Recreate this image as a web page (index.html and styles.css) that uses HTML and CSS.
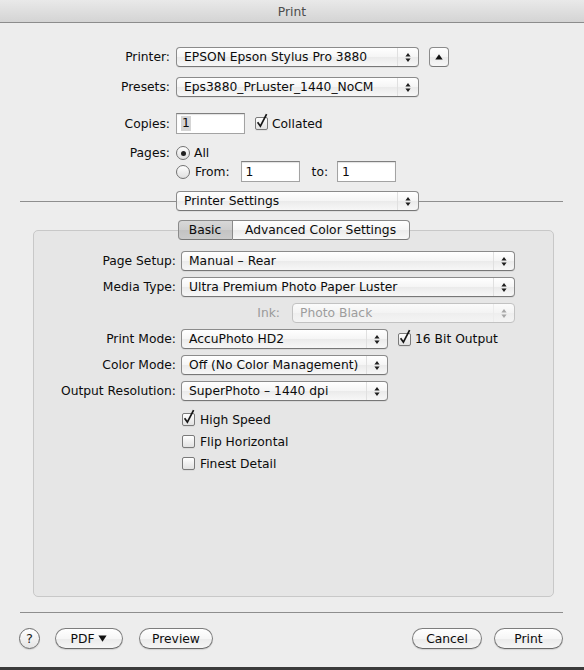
FILE: index.html
```html
<!DOCTYPE html>
<html>
<head>
<meta charset="utf-8">
<title>Print</title>
<link rel="stylesheet" href="styles.css">
</head>
<body>
<div class="window">
  <div class="titlebar">Print</div>
  <div class="main">
    <div class="row r-printer">
      <div class="lbl">Printer:</div>
      <div class="popup w243"><span class="pt">EPSON Epson Stylus Pro 3880</span><span class="arr"><svg class="ud" width="6" height="11" viewBox="0 0 6 11"><path d="M3 1L5.6 4.5H0.4Z M0.4 6.5H5.6L3 10Z"/></svg></span></div>
      <div class="sqbtn"><svg width="8" height="6" viewBox="0 0 8 6"><path d="M4 0.3L7.7 5.5H0.3Z"/></svg></div>
    </div>
    <div class="row r-presets">
      <div class="lbl">Presets:</div>
      <div class="popup w243"><span class="pt">Eps3880_PrLuster_1440_NoCM</span><span class="arr"><svg class="ud" width="6" height="11" viewBox="0 0 6 11"><path d="M3 1L5.6 4.5H0.4Z M0.4 6.5H5.6L3 10Z"/></svg></span></div>
    </div>
    <div class="row r-copies">
      <div class="lbl">Copies:</div>
      <div class="tf w69"><span class="sel">1</span></div>
      <span class="cb on ml10"><svg width="15" height="17" viewBox="0 0 15 17"><path d="M3.6 9.2L6.4 13.2L12.6 1.2"/></svg></span>
      <span class="ctext">Collated</span>
    </div>
    <div class="row r-all">
      <div class="lbl">Pages:</div>
      <span class="rb on"><span class="dot"></span></span>
      <span class="rtext">All</span>
    </div>
    <div class="row r-from">
      <div class="lbl"></div>
      <span class="rb"></span>
      <span class="rtext from">From:</span>
      <div class="tf w59"><span>1</span></div>
      <span class="to">to:</span>
      <div class="tf w59"><span>1</span></div>
    </div>
    <div class="row r-sep">
      <div class="line l-left"></div>
      <div class="popup w243"><span class="pt">Printer Settings</span><span class="arr"><svg class="ud" width="6" height="11" viewBox="0 0 6 11"><path d="M3 1L5.6 4.5H0.4Z M0.4 6.5H5.6L3 10Z"/></svg></span></div>
      <div class="line l-right"></div>
    </div>

    <div class="box">
      <div class="tabs">
        <div class="tab selected">Basic</div>
        <div class="tab adv">Advanced Color Settings</div>
      </div>
      <div class="brow first">
        <div class="blbl">Page Setup:</div>
        <div class="popup w334"><span class="pt">Manual – Rear</span><span class="arr"><svg class="ud" width="6" height="11" viewBox="0 0 6 11"><path d="M3 1L5.6 4.5H0.4Z M0.4 6.5H5.6L3 10Z"/></svg></span></div>
      </div>
      <div class="brow">
        <div class="blbl">Media Type:</div>
        <div class="popup w334"><span class="pt">Ultra Premium Photo Paper Luster</span><span class="arr"><svg class="ud" width="6" height="11" viewBox="0 0 6 11"><path d="M3 1L5.6 4.5H0.4Z M0.4 6.5H5.6L3 10Z"/></svg></span></div>
      </div>
      <div class="brow">
        <div class="blbl ink">Ink:</div>
        <div class="popup dis w223"><span class="pt">Photo Black</span><span class="arr"><svg class="ud" width="6" height="11" viewBox="0 0 6 11"><path d="M3 1L5.6 4.5H0.4Z M0.4 6.5H5.6L3 10Z"/></svg></span></div>
      </div>
      <div class="brow">
        <div class="blbl">Print Mode:</div>
        <div class="popup w207"><span class="pt">AccuPhoto HD2</span><span class="arr"><svg class="ud" width="6" height="11" viewBox="0 0 6 11"><path d="M3 1L5.6 4.5H0.4Z M0.4 6.5H5.6L3 10Z"/></svg></span></div>
        <span class="cb on ml10"><svg width="15" height="17" viewBox="0 0 15 17"><path d="M3.6 9.2L6.4 13.2L12.6 1.2"/></svg></span>
        <span class="ctext">16 Bit Output</span>
      </div>
      <div class="brow">
        <div class="blbl">Color Mode:</div>
        <div class="popup w207"><span class="pt">Off (No Color Management)</span><span class="arr"><svg class="ud" width="6" height="11" viewBox="0 0 6 11"><path d="M3 1L5.6 4.5H0.4Z M0.4 6.5H5.6L3 10Z"/></svg></span></div>
      </div>
      <div class="brow">
        <div class="blbl">Output Resolution:</div>
        <div class="popup w207"><span class="pt">SuperPhoto – 1440 dpi</span><span class="arr"><svg class="ud" width="6" height="11" viewBox="0 0 6 11"><path d="M3 1L5.6 4.5H0.4Z M0.4 6.5H5.6L3 10Z"/></svg></span></div>
      </div>
      <div class="checks">
        <div class="chkrow"><span class="cb on"><svg width="15" height="17" viewBox="0 0 15 17"><path d="M3.6 9.2L6.4 13.2L12.6 1.2"/></svg></span><span class="ctext">High Speed</span></div>
        <div class="chkrow"><span class="cb"></span><span class="ctext">Flip Horizontal</span></div>
        <div class="chkrow"><span class="cb"></span><span class="ctext">Finest Detail</span></div>
      </div>
    </div>

    <div class="hsep"></div>
    <div class="buttons">
      <div class="help">?</div>
      <div class="pill b-pdf">PDF <svg width="9" height="7" viewBox="0 0 9 7"><path d="M0.4 0.5H8.6L4.5 6.8Z"/></svg></div>
      <div class="pill b-preview">Preview</div>
      <div class="spacer"></div>
      <div class="pill b-cancel">Cancel</div>
      <div class="pill b-print">Print</div>
    </div>
  </div>
</div>
</body>
</html>
```

FILE: styles.css
```css
* { box-sizing: border-box; }

body {
  margin: 0;
  width: 584px;
  height: 670px;
  overflow: hidden;
  background: #3b3b3b;
  font-family: "Lucida Grande", "DejaVu Sans", sans-serif;
  font-size: 12.3px;
  color: #0c0c0c;
}

.window {
  width: 584px;
  height: 667px;
  background: #ededed;
}

.titlebar {
  height: 23px;
  padding-top: 3px;
  line-height: 19px;
  text-align: center;
  color: #4d4d4d;
  border-bottom: 1px solid #8c8c8c;
  background: linear-gradient(#e9e9e9, #d4d4d4);
}

.main { padding-top: 24px; }

.row {
  display: flex;
  align-items: center;
  height: 20px;
  white-space: nowrap;
}

.lbl {
  width: 170px;
  margin-right: 6px;
  text-align: right;
  flex: none;
}

.r-presets { margin-top: 10px; }
.r-copies { margin-top: 16px; height: 21px; }
.r-all { margin-top: 11px; height: 16px; }
.r-from { height: 21px; }
.r-sep { margin-top: 9px; }

/* popup buttons */
.popup {
  height: 20px;
  display: flex;
  align-items: center;
  flex: none;
  border: 1px solid #8b8b8b;
  border-bottom-color: #777;
  border-radius: 4px;
  background: linear-gradient(#ffffff, #f5f5f5 50%, #ebebeb 52%, #f7f7f7);
  box-shadow: 0 1px 0 rgba(0, 0, 0, 0.06);
}
.pt {
  flex: 1;
  padding-left: 7px;
  white-space: nowrap;
  overflow: hidden;
}
.arr {
  width: 21px;
  height: 100%;
  display: flex;
  align-items: center;
  justify-content: center;
  border-left: 1px solid #e0e0e0;
}
.ud { display: block; fill: #1e1e1e; }

.popup.dis {
  border-color: #c2c2c2;
  color: #9d9d9d;
  background: linear-gradient(#fbfbfb, #f3f3f3 50%, #eeeeee 52%, #f4f4f4);
  box-shadow: none;
}
.popup.dis .ud { fill: #a6a6a6; }
.popup.dis .arr { border-left-color: #ececec; }

.w243 { width: 243px; }
.w334 { width: 334px; }
.w223 { width: 223px; }
.w207 { width: 207px; }

.sqbtn {
  width: 20px;
  height: 20px;
  margin-left: 10px;
  display: flex;
  align-items: center;
  justify-content: center;
  border: 1px solid #8b8b8b;
  border-bottom-color: #777;
  border-radius: 4px;
  background: linear-gradient(#ffffff, #f5f5f5 50%, #ebebeb 52%, #f7f7f7);
}
.sqbtn svg { display: block; fill: #111; }

/* text fields */
.tf {
  height: 21px;
  display: flex;
  align-items: center;
  padding-left: 4px;
  flex: none;
  background: #fff;
  border: 1px solid #a3a3a3;
  border-top-color: #7f7f7f;
  box-shadow: inset 0 1px 1px rgba(0, 0, 0, 0.12);
}
.w69 { width: 69px; }
.w59 { width: 59px; }
.tf .sel { background: #d5d5d5; padding: 0 1px; line-height: 15px; }

/* checkboxes */
.cb {
  position: relative;
  display: inline-block;
  width: 13px;
  height: 13px;
  flex: none;
  border: 1px solid #7a7a7a;
  border-radius: 2px;
  background: linear-gradient(#ffffff, #f0f0f0 50%, #e2e2e2);
  box-shadow: 0 1px 0 rgba(0, 0, 0, 0.05);
}
.cb svg {
  position: absolute;
  left: -2px;
  top: -5px;
  overflow: visible;
}
.cb svg path {
  fill: none;
  stroke: #161616;
  stroke-width: 1.7;
  stroke-linejoin: miter;
}
.ml10 { margin-left: 10px; }
.ctext { margin-left: 4px; }

/* radios */
.rb {
  width: 14px;
  height: 14px;
  flex: none;
  display: flex;
  align-items: center;
  justify-content: center;
  border: 1px solid #727272;
  border-radius: 50%;
  background: linear-gradient(#ffffff, #eeeeee 50%, #e0e0e0);
}
.rb .dot {
  width: 5px;
  height: 5px;
  border-radius: 50%;
  background: #222;
}
.rtext { margin-left: 4px; }
.rtext.from { margin-left: 5px; margin-right: 11px; }
.to { margin-left: 12px; margin-right: 9px; }

/* separator lines */
.line { height: 1px; background: #8e8e8e; }
.l-left { width: 156px; margin-left: 20px; }
.l-right { width: 144px; }

/* tab box */
.box {
  margin: 19px 0 0 33px;
  width: 521px;
  height: 367px;
  border: 1px solid #c8c8c8;
  border-radius: 5px;
  background: #e6e6e6;
}
.tabs {
  display: flex;
  justify-content: center;
  margin-top: -11px;
  height: 20px;
}
.tab {
  height: 20px;
  display: flex;
  align-items: center;
  justify-content: center;
  white-space: nowrap;
  border: 1px solid #8a8a8a;
  border-bottom-color: #777;
  background: linear-gradient(#ffffff, #f5f5f5 50%, #ebebeb 52%, #f7f7f7);
}
.tab.selected {
  width: 55px;
  border-radius: 4px 0 0 4px;
  background: linear-gradient(#d8d8d8, #cdcdcd 50%, #c3c3c3 52%, #cbcbcb);
}
.tab.adv {
  width: 177px;
  border-left: none;
  border-radius: 0 4px 4px 0;
}

.brow {
  display: flex;
  align-items: center;
  height: 20px;
  margin-top: 6px;
  white-space: nowrap;
}
.brow.first { margin-top: 11px; }
.blbl {
  width: 142px;
  margin-right: 5px;
  text-align: right;
  flex: none;
}
.blbl.ink { width: 246px; margin-right: 12px; color: #9a9a9a; }

.checks {
  margin-top: 12px;
  padding-left: 148px;
  display: flex;
  flex-direction: column;
  gap: 9px;
}
.chkrow {
  display: flex;
  align-items: center;
  height: 13px;
  white-space: nowrap;
}
.chkrow .ctext { margin-left: 5px; }

/* bottom */
.hsep {
  margin: 15px 0 0 20px;
  width: 543px;
  height: 1px;
  background: #8e8e8e;
}
.buttons {
  display: flex;
  align-items: center;
  height: 21px;
  margin-top: 15px;
  padding: 0 21px 0 19px;
}
.help {
  width: 21px;
  height: 21px;
  flex: none;
  display: flex;
  align-items: center;
  justify-content: center;
  border: 1px solid #6c6c6c;
  border-radius: 50%;
  font-size: 13px;
  color: #1a1a1a;
  background: linear-gradient(#ffffff, #f2f2f2 50%, #e4e4e4);
  box-shadow: 0 1px 1px rgba(0, 0, 0, 0.12);
}
.pill {
  height: 21px;
  flex: none;
  display: flex;
  align-items: center;
  justify-content: center;
  gap: 4px;
  border: 1px solid #7d7d7d;
  border-bottom-color: #6a6a6a;
  border-radius: 11px;
  background: linear-gradient(#ffffff, #f6f6f6 50%, #ebebeb 52%, #f5f5f5);
  box-shadow: 0 1px 1px rgba(0, 0, 0, 0.12);
  white-space: nowrap;
}
.pill svg { display: block; fill: #111; }
.b-pdf { width: 68px; margin-left: 15px; }
.b-preview { width: 74px; margin-left: 16px; }
.spacer { flex: 1; }
.b-cancel { width: 70px; }
.b-print { width: 69px; margin-left: 12px; }
```
